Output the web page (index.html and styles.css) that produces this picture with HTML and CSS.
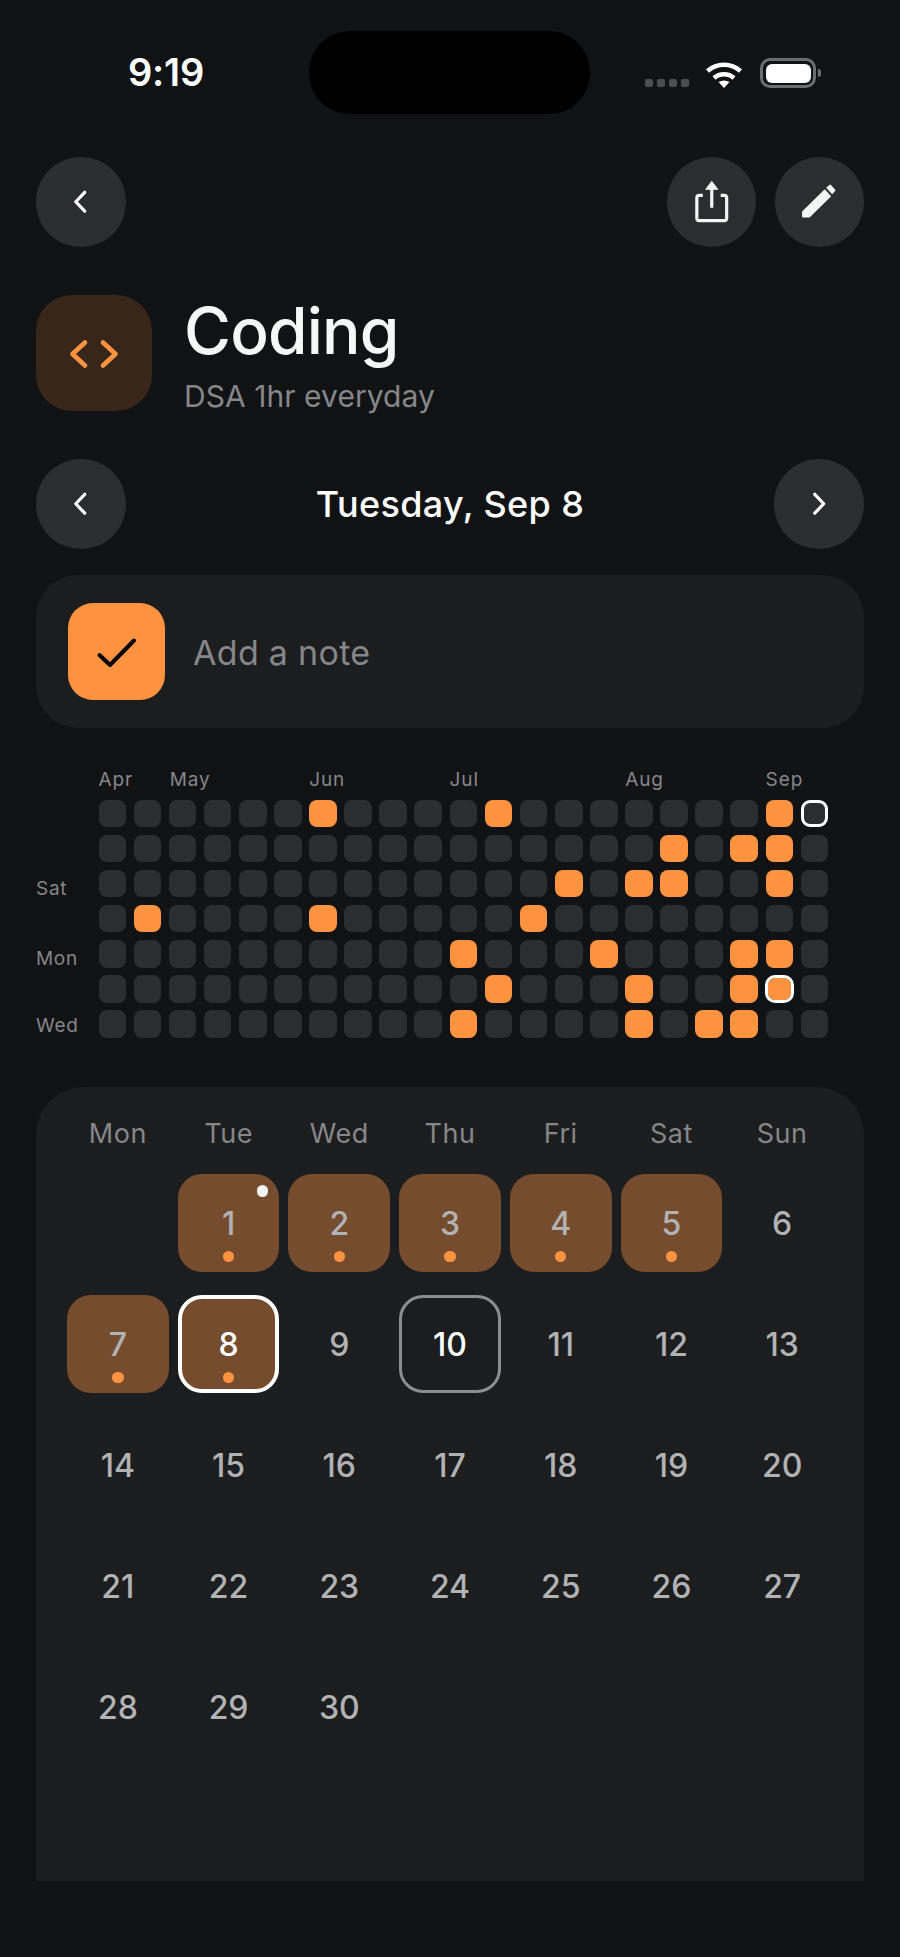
FILE: index.html
```html
<!DOCTYPE html>
<html lang="en">
<head>
<meta charset="utf-8">
<title>Coding</title>
<link rel="stylesheet" href="styles.css">
</head>
<body>
<main class="screen">
  <header class="status">
    <div class="time">9:19</div>
    <div class="island"></div>
    <div class="sys">
      <div class="signal"><span></span><span></span><span></span><span></span></div>
      <svg class="wifi" viewBox="0 0 38 28"><path d="M2.5 11.5A25 25 0 0 1 35.5 11.5M9 18.5A15 15 0 0 1 29 18.5" fill="none" stroke="#fff" stroke-width="4.6"/><path d="M13.5 22.6Q19 19.4 24.500 22.6L19 28.500Z" fill="#fff"/></svg>
      <div class="battery"><div class="charge"></div></div>
      <div class="nub"></div>
    </div>
  </header>

  <nav class="toolbar">
    <button class="round"><svg viewBox="0 0 90 90"><path class="chev" d="M49 35.500L40 45L49 54.500"/></svg></button>
    <div class="tool-right">
      <button class="round"><svg viewBox="0 0 90 90"><path class="line" d="M36 38.500H32.500a2.500 2.500 0 0 0-2.500 2.500V61.500a2.500 2.500 0 0 0 2.500 2.500H57.500a2.500 2.500 0 0 0 2.500-2.500V41a2.500 2.500 0 0 0-2.500-2.500H54M45 30V51"/><path class="solid" d="M45 24.500L51 32.500H39Z"/></svg></button>
      <button class="round"><svg viewBox="0 0 90 90"><path class="solid pen" d="M28 55L50 33.500L55.500 39.500L34.500 60H28ZM52.500 31L55.500 28.500L60 33.500L57.500 36.500Z"/></svg></button>
    </div>
  </nav>

  <section class="habit">
    <div class="habit-icon"><svg viewBox="0 0 116 116"><path class="code" d="M49 47.500L36.500 59L49 70.500M67 47.500L79.500 59L67 70.500"/></svg></div>
    <div class="habit-text">
      <h1>Coding</h1>
      <p>DSA 1hr everyday</p>
    </div>
  </section>

  <section class="date-nav">
    <button class="round"><svg viewBox="0 0 90 90"><path class="chev" d="M49 35.500L40 45L49 54.500"/></svg></button>
    <div class="date">Tuesday, Sep 8</div>
    <button class="round"><svg viewBox="0 0 90 90"><path class="chev" d="M41 35.500L50 45L41 54.500"/></svg></button>
  </section>

  <section class="note">
    <div class="check"><svg viewBox="0 0 97 97"><path class="tick" d="M31.500 52L42 62L66 37.500"/></svg></div>
    <div class="note-text">Add a note</div>
  </section>

  <section class="heat">
    <div class="months">
      <span class="m-apr">Apr</span><span class="m-may">May</span><span class="m-jun">Jun</span><span class="m-jul">Jul</span><span class="m-aug">Aug</span><span class="m-sep">Sep</span>
    </div>
    <div class="heat-body">
      <div class="days">
        <span class="d-sat">Sat</span><span class="d-mon">Mon</span><span class="d-wed">Wed</span>
      </div>
      <div class="cells">
        <span class="h"></span><span class="h"></span><span class="h"></span><span class="h"></span><span class="h"></span><span class="h"></span><span class="h on"></span><span class="h"></span><span class="h"></span><span class="h"></span><span class="h"></span><span class="h on"></span><span class="h"></span><span class="h"></span><span class="h"></span><span class="h"></span><span class="h"></span><span class="h"></span><span class="h"></span><span class="h on"></span><span class="h ring"></span>
        <span class="h"></span><span class="h"></span><span class="h"></span><span class="h"></span><span class="h"></span><span class="h"></span><span class="h"></span><span class="h"></span><span class="h"></span><span class="h"></span><span class="h"></span><span class="h"></span><span class="h"></span><span class="h"></span><span class="h"></span><span class="h"></span><span class="h on"></span><span class="h"></span><span class="h on"></span><span class="h on"></span><span class="h"></span>
        <span class="h"></span><span class="h"></span><span class="h"></span><span class="h"></span><span class="h"></span><span class="h"></span><span class="h"></span><span class="h"></span><span class="h"></span><span class="h"></span><span class="h"></span><span class="h"></span><span class="h"></span><span class="h on"></span><span class="h"></span><span class="h on"></span><span class="h on"></span><span class="h"></span><span class="h"></span><span class="h on"></span><span class="h"></span>
        <span class="h"></span><span class="h on"></span><span class="h"></span><span class="h"></span><span class="h"></span><span class="h"></span><span class="h on"></span><span class="h"></span><span class="h"></span><span class="h"></span><span class="h"></span><span class="h"></span><span class="h on"></span><span class="h"></span><span class="h"></span><span class="h"></span><span class="h"></span><span class="h"></span><span class="h"></span><span class="h"></span><span class="h"></span>
        <span class="h"></span><span class="h"></span><span class="h"></span><span class="h"></span><span class="h"></span><span class="h"></span><span class="h"></span><span class="h"></span><span class="h"></span><span class="h"></span><span class="h on"></span><span class="h"></span><span class="h"></span><span class="h"></span><span class="h on"></span><span class="h"></span><span class="h"></span><span class="h"></span><span class="h on"></span><span class="h on"></span><span class="h"></span>
        <span class="h"></span><span class="h"></span><span class="h"></span><span class="h"></span><span class="h"></span><span class="h"></span><span class="h"></span><span class="h"></span><span class="h"></span><span class="h"></span><span class="h"></span><span class="h on"></span><span class="h"></span><span class="h"></span><span class="h"></span><span class="h on"></span><span class="h"></span><span class="h"></span><span class="h on"></span><span class="h on ring"></span><span class="h"></span>
        <span class="h"></span><span class="h"></span><span class="h"></span><span class="h"></span><span class="h"></span><span class="h"></span><span class="h"></span><span class="h"></span><span class="h"></span><span class="h"></span><span class="h on"></span><span class="h"></span><span class="h"></span><span class="h"></span><span class="h"></span><span class="h on"></span><span class="h"></span><span class="h on"></span><span class="h on"></span><span class="h"></span><span class="h"></span>
      </div>
    </div>
  </section>

  <section class="calendar">
    <div class="weekdays">
      <span>Mon</span><span>Tue</span><span>Wed</span><span>Thu</span><span>Fri</span><span>Sat</span><span>Sun</span>
    </div>
    <div class="month">
      <div class="day empty"></div>
      <div class="day done"><i class="note-dot"></i>1<i class="dot"></i></div>
      <div class="day done">2<i class="dot"></i></div>
      <div class="day done">3<i class="dot"></i></div>
      <div class="day done">4<i class="dot"></i></div>
      <div class="day done">5<i class="dot"></i></div>
      <div class="day">6</div>
      <div class="day done">7<i class="dot"></i></div>
      <div class="day done selected">8<i class="dot"></i></div>
      <div class="day">9</div>
      <div class="day today">10</div>
      <div class="day">11</div>
      <div class="day">12</div>
      <div class="day">13</div>
      <div class="day">14</div>
      <div class="day">15</div>
      <div class="day">16</div>
      <div class="day">17</div>
      <div class="day">18</div>
      <div class="day">19</div>
      <div class="day">20</div>
      <div class="day">21</div>
      <div class="day">22</div>
      <div class="day">23</div>
      <div class="day">24</div>
      <div class="day">25</div>
      <div class="day">26</div>
      <div class="day">27</div>
      <div class="day">28</div>
      <div class="day">29</div>
      <div class="day">30</div>
    </div>
  </section>
</main>
</body>
</html>
```
FILE: styles.css
```css
* { box-sizing: border-box; }
html, body { margin: 0; padding: 0; background: #111214; }
body { font-family: Inter, "Noto Sans", sans-serif; color: #fff; }
.screen { width: 900px; height: 1957px; padding: 31px 36px 0; overflow: hidden; }

/* status bar */
.status { display: flex; height: 83px; align-items: flex-start; }
.time { width: 273px; padding: 22px 0 0 92px; font-size: 38px; line-height: 38px; font-weight: 600; letter-spacing: -0.200px; color: #fff; white-space: nowrap; }
.island { width: 281px; height: 83px; background: #000; border-radius: 41px; }
.sys { display: flex; align-items: flex-start; margin-left: 55px; }
.signal { display: flex; gap: 4.500px; margin-top: 48px; }
.signal span { width: 7.500px; height: 8px; background: #4c4d4f; border-radius: 2px; }
.wifi { width: 38px; height: 29px; margin: 28px 0 0 16px; }
.battery { width: 56px; height: 30px; margin: 27px 0 0 17.500px; border: 3px solid #6d6e70; border-radius: 10px; padding: 2.500px; }
.charge { width: 100%; height: 100%; background: #fff; border-radius: 6px; }
.nub { width: 3px; height: 8px; margin: 38px 0 0 2px; background: #6d6e70; border-radius: 0 3px 3px 0; }

/* round buttons */
.round { width: 89.500px; height: 89.500px; padding: 0; border: 0; border-radius: 50%; background: #2c2d2f; display: block; flex: none; }
.round svg { display: block; width: 89.500px; height: 89.500px; }
.chev { fill: none; stroke: #fff; stroke-width: 3.200px; stroke-linecap: round; stroke-linejoin: round; }
.line { fill: none; stroke: #f4f5f5; stroke-width: 3.200px; stroke-linecap: butt; }
.solid { fill: #f4f5f5; stroke: #f4f5f5; stroke-width: 1px; stroke-linejoin: round; }
.pen { stroke-width: 1.500px; }

.toolbar { display: flex; justify-content: space-between; margin-top: 43px; }
.tool-right { display: flex; gap: 18.500px; }

/* habit header */
.habit { display: flex; height: 116.500px; margin-top: 48px; }
.habit-icon { width: 116px; height: 116.500px; background: #38261a; border-radius: 36px; flex: none; }
.habit-icon svg { display: block; width: 116px; height: 116px; }
.code { fill: none; stroke: #ff9340; stroke-width: 4.600px; stroke-linecap: round; stroke-linejoin: round; }
.habit-text { margin-left: 32px; }
h1 { margin: 0; font-size: 64px; line-height: 72px; font-weight: 500; letter-spacing: -0.800px; color: #f6f7f7; }
.habit-text p { margin: 0; padding-top: 11px; font-size: 30px; line-height: 36px; font-weight: 400; letter-spacing: 0.050px; color: #85868a; }

/* date row */
.date-nav { display: flex; justify-content: space-between; align-items: center; margin-top: 48px; }
.date { font-size: 36px; line-height: 44px; font-weight: 500; letter-spacing: 0.350px; color: #fff; }

/* note */
.note { display: flex; align-items: center; height: 152.500px; margin-top: 26.500px; padding-left: 32px; background: #1c1d1f; border-radius: 42px; }
.check { width: 97px; height: 97px; background: #ff9340; border-radius: 25px; flex: none; }
.check svg { display: block; width: 97px; height: 97px; }
.tick { fill: none; stroke: #000; stroke-width: 4px; stroke-linecap: round; stroke-linejoin: round; }
.note-text { margin: 3px 0 0 28px; font-size: 34px; line-height: 40px; letter-spacing: 0.300px; color: #85868a; }

/* heat map */
.heat { margin-top: 40.500px; }
.months { display: grid; grid-template-columns: repeat(21, 27.600px); column-gap: 7.530px; margin-left: 62.500px; height: 31.500px; font-size: 19px; line-height: 24px; letter-spacing: 0.900px; color: #85868a; }
.months span { white-space: nowrap; }
.m-apr { grid-column: 1 / span 2; }
.m-may { grid-column: 3 / span 4; margin-left: 1px; }
.m-jun { grid-column: 7 / span 4; }
.m-jul { grid-column: 11 / span 5; }
.m-aug { grid-column: 16 / span 4; }
.m-sep { grid-column: 20 / span 2; }
.heat-body { display: flex; }
.days { position: relative; width: 62.500px; flex: none; font-size: 19px; line-height: 24px; letter-spacing: 0.700px; color: #85868a; }
.days span { position: absolute; left: 0; }
.d-sat { top: 77.500px; }
.d-mon { top: 147.500px; }
.d-wed { top: 214.500px; }
.cells { display: grid; grid-template-columns: repeat(21, 27.600px); grid-auto-rows: 27.600px; gap: 7.530px; }
.h { display: block; background: #2c2d2f; border-radius: 8px; }
.h.on { background: #ff9340; }
.h.ring { border: 3px solid #fff; border-radius: 9px; }
.h.on.ring { border-width: 3.500px; margin: -0.500px; border-radius: 10px; background-clip: padding-box; }

/* calendar */
.calendar { height: 794px; margin-top: 49.500px; padding: 29px 31px 0; background: #1c1d1f; border-radius: 48px 48px 0 0; }
.weekdays { display: grid; grid-template-columns: repeat(7, 1fr); column-gap: 9px; height: 58px; font-size: 27px; line-height: 36px; letter-spacing: 0.500px; color: #85868a; text-align: center; }
.month { display: grid; grid-template-columns: repeat(7, 1fr); grid-auto-rows: 98px; gap: 23px 9px; }
.day { position: relative; display: flex; align-items: center; justify-content: center; border-radius: 24px; font-size: 32px; font-weight: 500; color: #b1b2b4; }
.day.done { background: #754c2e; }
.day.selected { border: 4px solid #fff; color: #fff; }
.day.today { border: 3.500px solid #8c8d8f; color: #fff; }
.dot { position: absolute; left: 50%; bottom: 10px; width: 11.500px; height: 11.500px; margin-left: -5.750px; background: #ff9340; border-radius: 50%; }
.selected .dot { bottom: 6px; }
.note-dot { position: absolute; top: 11px; right: 11px; width: 11.500px; height: 11.500px; background: #f4f5f5; border-radius: 50%; }
```
